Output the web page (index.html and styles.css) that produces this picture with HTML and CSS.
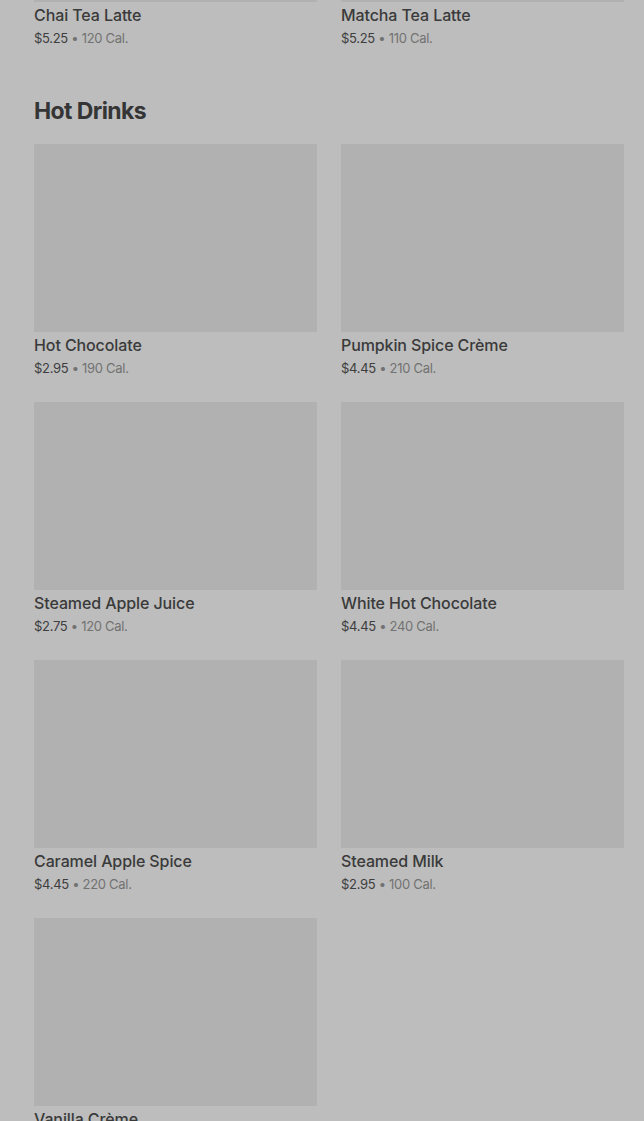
FILE: index.html
```html
<!DOCTYPE html>
<html lang="en">
<head>
    <meta charset="UTF-8">
    <meta name="viewport" content="width=device-width, initial-scale=1.0">
    <title>Menu</title>
    <link rel="stylesheet" href="styles.css">
</head>
<body>
    <div class="menu">
        <!-- end of previous section, scrolled past -->
        <div class="item-grid">
            <div class="item">
                <div class="item-image"></div>
                <div class="item-title">Chai Tea Latte</div>
                <div class="item-meta"><span class="price">$5.25</span> • 120 Cal.</div>
            </div>
            <div class="item">
                <div class="item-image"></div>
                <div class="item-title">Matcha Tea Latte</div>
                <div class="item-meta"><span class="price">$5.25</span> • 110 Cal.</div>
            </div>
        </div>

        <div class="section">
            <h2 class="section-title">Hot Drinks</h2>
            <div class="item-grid">
                <div class="item">
                    <div class="item-image"></div>
                    <div class="item-title">Hot Chocolate</div>
                    <div class="item-meta"><span class="price">$2.95</span> • 190 Cal.</div>
                </div>
                <div class="item">
                    <div class="item-image"></div>
                    <div class="item-title">Pumpkin Spice Crème</div>
                    <div class="item-meta"><span class="price">$4.45</span> • 210 Cal.</div>
                </div>
                <div class="item">
                    <div class="item-image"></div>
                    <div class="item-title">Steamed Apple Juice</div>
                    <div class="item-meta"><span class="price">$2.75</span> • 120 Cal.</div>
                </div>
                <div class="item">
                    <div class="item-image"></div>
                    <div class="item-title">White Hot Chocolate</div>
                    <div class="item-meta"><span class="price">$4.45</span> • 240 Cal.</div>
                </div>
                <div class="item">
                    <div class="item-image"></div>
                    <div class="item-title">Caramel Apple Spice</div>
                    <div class="item-meta"><span class="price">$4.45</span> • 220 Cal.</div>
                </div>
                <div class="item">
                    <div class="item-image"></div>
                    <div class="item-title">Steamed Milk</div>
                    <div class="item-meta"><span class="price">$2.95</span> • 100 Cal.</div>
                </div>
                <div class="item">
                    <div class="item-image"></div>
                    <div class="item-title">Vanilla Crème</div>
                    <div class="item-meta"><span class="price">$3.95</span> • 200 Cal.</div>
                </div>
            </div>
        </div>
    </div>
</body>
</html>
```

FILE: styles.css
```css
/* Basic Styles */
body {
    font-family: Inter, "Noto Sans", sans-serif;
    margin: 0;
    padding: 0;
    background-color: #bdbdbd;
    overflow: hidden;
}

.menu {
    padding: 0 20px 0 34px;
    margin-top: -186px;
}

.item-grid {
    display: grid;
    grid-template-columns: 1fr 1fr;
    column-gap: 24px;
    row-gap: 24px;
}

.item-image {
    height: 188px;
    background-color: #b1b1b1;
}

.item-title {
    margin-top: 2px;
    font-size: 16px;
    line-height: 22px;
    font-weight: 500;
    letter-spacing: -0.1px;
    color: #3a3a3a;
}

.item-meta {
    margin-top: 2px;
    font-size: 13px;
    line-height: 20px;
    letter-spacing: -0.3px;
    color: #727272;
}

.item-meta .price {
    color: #3e3e3e;
}

.section {
    margin-top: 47px;
}

.section-title {
    margin: 0 0 17px 0;
    font-size: 23px;
    line-height: 32px;
    font-weight: 700;
    letter-spacing: -0.6px;
    color: #353535;
}
```
